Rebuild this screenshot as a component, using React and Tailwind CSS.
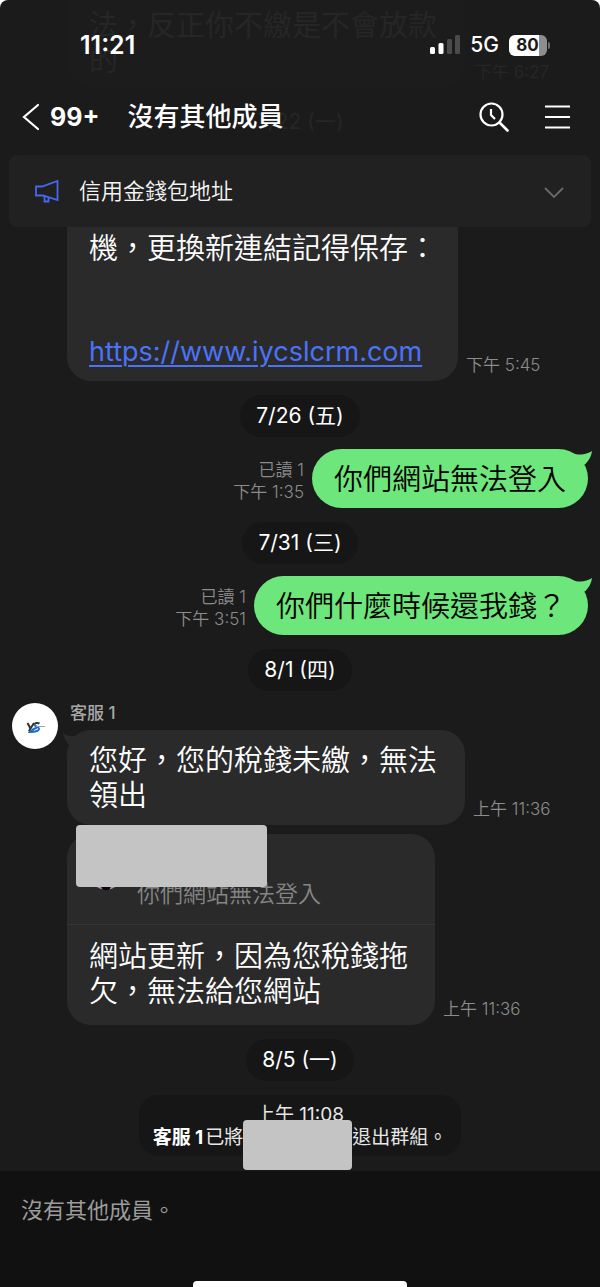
import { Fragment } from "react";

const AppFont =
  "font-[Inter,'Noto_Sans_CJK_TC',sans-serif] text-white bg-[#1b1b1b]";

const StatusBar = () => (
  <div className="relative flex items-center justify-between pl-20 pr-[50px] h-[90px]">
    <span className="text-[25px] leading-8 font-semibold">11:21</span>
    <div className="flex items-center">
      <svg className="w-[30px] h-5" viewBox="0 0 30 20" aria-hidden="true">
        <rect x="0" y="12" width="5" height="7" rx="1.5" fill="#fff" />
        <rect x="8.500" y="8" width="5" height="11" rx="1.500" fill="#fff" />
        <rect x="17" y="4" width="5" height="15" rx="1.500" fill="#4b4b4b" />
        <rect x="25" y="0" width="5" height="19" rx="1.500" fill="#4b4b4b" />
      </svg>
      <span className="ml-2.5 text-[21px] leading-6 font-medium">5G</span>
      <div className="ml-2.5 flex items-center">
        <span className="w-[38px] h-[21px] pr-px rounded-md bg-[linear-gradient(to_right,#fff_80%,#8e8e8e_80%)] text-[17px] leading-[21px] font-bold text-[#1b1b1b] text-center">
          80
        </span>
        <span className="ml-px w-[2px] h-[7px] rounded-r bg-[#6e6e6e]" />
      </div>
    </div>
  </div>
);

const TitleBar = () => (
  <div className="relative flex items-center h-[53px] pl-[22px] pr-[30px]">
    <button className="flex items-center" aria-label="返回">
      <svg className="w-[18px] h-7" viewBox="0 0 18 28" fill="none" stroke="#fff" strokeWidth="2.200" strokeLinecap="round">
        <path d="M16 2 2 14l14 12" />
      </svg>
      <span className="ml-2.5 text-[25px] leading-8 font-bold">99+</span>
    </button>
    <h1 className="ml-7 flex-1 text-[26px] leading-8 font-medium">沒有其他成員</h1>
    <button aria-label="搜尋">
      <svg className="w-[30px] h-[30px]" viewBox="0 0 30 30" fill="none" stroke="#fff" strokeWidth="2.200" strokeLinecap="round">
        <circle cx="12.500" cy="12.500" r="11" />
        <path d="M20.500 20.500 28.500 28.500" strokeWidth="2.600" />
        <path d="M12 7v6l4 4" strokeLinecap="butt" />
      </svg>
    </button>
    <button className="ml-9" aria-label="選單">
      <svg className="w-[25px] h-6" viewBox="0 0 25 24" stroke="#fff" strokeWidth="2.200">
        <path d="M0 1.500h25M0 12h25M0 22.500h25" />
      </svg>
    </button>
  </div>
);

// Older messages, barely visible through the header
const FadedHistory = () => (
  <div className="absolute inset-x-0 top-0 h-[150px] overflow-hidden text-[#262626]" aria-hidden="true">
    <div className="absolute left-[67px] top-0 w-[398px] h-[88px] rounded-b-[24px] bg-[#1c1c1c] pl-[22px] pt-2 text-[29px] leading-[35px]">
      <p>法，反正你不繳是不會放款</p>
      <p>的</p>
    </div>
    <p className="absolute left-[475px] top-[61px] text-[17px] leading-[22px]">下午 6:27</p>
    <p className="absolute inset-x-0 top-[108px] text-center text-[21px] leading-7">7/22 (一)</p>
  </div>
);

const Notice = () => (
  <button className="relative flex items-center mx-[9px] mt-3 h-[72px] pl-[26px] pr-[27px] rounded-lg bg-[#212121] text-left">
    <svg className="w-6 h-[23px]" viewBox="0 0 24 23" fill="none" stroke="#4468f2" strokeWidth="1.800">
      <path d="M1 6.500h6L22.500 1v19L8 15.500H1z" />
      <path d="M9.500 16v5.500h4V17" />
    </svg>
    <span className="ml-5 flex-1 text-[22px] leading-8 font-[350] text-[#f5f5f5]">信用金錢包地址</span>
    <svg className="w-5 h-3 mt-1" viewBox="0 0 20 12" fill="none" stroke="#6a6a6a" strokeWidth="1.800">
      <path d="m1 1 9 9 9-9" />
    </svg>
  </button>
);

const DatePill = ({ children }) => (
  <div className="self-center mt-3.5 h-[42px] px-4 rounded-full bg-[#161616] text-[21px] leading-[42px]">
    {children}
  </div>
);

const Time = ({ lines, className }) => (
  <div className={`pb-[5px] text-[17px] leading-[22px] font-[350] text-[#8c8c8c] ${className}`}>
    {lines.map((line, i) => (
      <Fragment key={line}>
        {i > 0 && <br />}
        {line}
      </Fragment>
    ))}
  </div>
);

const Sent = ({ text, time }) => (
  <div className="flex items-end justify-end mt-3 pr-3">
    <Time lines={["已讀 1", time]} className="mr-2 text-right" />
    <div className="relative px-[22px] pt-[13px] pb-[11px] rounded-[30px] bg-[#6de67b] text-[29px] leading-[35px] font-[350] text-black">
      {text}
      <svg className="absolute -right-1 top-0 w-7 h-5" viewBox="0 0 28 20" fill="#6de67b" aria-hidden="true">
        <path d="M6 3C14 7 22 6 28 2c-.5 5-3 9-6.500 13L16 18z" />
      </svg>
    </div>
  </div>
);

const Bubble = ({ children, className }) => (
  <div className={`relative bg-[#2a2a2a] text-[29px] leading-[35px] font-[350] ${className}`}>{children}</div>
);

const Avatar = () => (
  <svg className="w-[46px] h-[46px]" viewBox="0 0 46 46" role="img" aria-label="客服 1">
    <circle cx="23" cy="23" r="23" fill="#fff" />
    <g fill="none" strokeWidth="2">
      <path d="m15.500 20 3 5.500 3.500-5.500M18.500 25l-1.500 3.500" stroke="#333" />
      <path d="M27.500 20.500c-2-1-5-.5-5 1.200" stroke="#333" />
      <path d="M22.500 21.700c0 1.800 4.500 1.600 4.500 4s-4.500 3.500-9 3.300c2-2 4-3.500 7-4.500" stroke="#1f6fc4" />
      <path d="M24 23.500h9" stroke="#7fa9d6" strokeWidth="1" />
    </g>
  </svg>
);

export default function App() {
  return (
    <div className={`min-h-screen flex flex-col rounded-t-[8px] overflow-hidden ${AppFont}`}>
      <header className="relative flex flex-col">
        <FadedHistory />
        <StatusBar />
        <TitleBar />
        <Notice />
      </header>

      <main className="flex-1 flex flex-col">
        <div className="flex items-end pl-[67px]">
          <Bubble className="pl-[22px] pr-[21px] pt-1 pb-3 rounded-b-[24px]">
            <p>機，更換新連結記得保存：</p>
            <p className="mt-[68px] text-[27px] font-normal">
              <a href="https://www.iycslcrm.com" className="text-[#4a73f8] underline decoration-2 underline-offset-4">
                https://www.iycslcrm.com
              </a>
            </p>
          </Bubble>
          <Time lines={["下午 5:45"]} className="ml-2" />
        </div>

        <DatePill>7/26 (五)</DatePill>
        <Sent text="你們網站無法登入" time="下午 1:35" />
        <DatePill>7/31 (三)</DatePill>
        <Sent text="你們什麼時候還我錢？" time="下午 3:51" />
        <DatePill>8/1 (四)</DatePill>

        <div className="flex items-start mt-3 pl-3">
          <Avatar />
          <div className="ml-[9px]">
            <p className="pl-[3px] text-[17px] leading-5 font-medium text-[#a8a8a8]">客服 1</p>
            <div className="flex items-end mt-[7px]">
              <Bubble className="w-[398px] pl-[22px] pt-[13px] pb-3 rounded-[24px]">
                <svg className="absolute -left-1 top-[2px] w-6 h-5" viewBox="0 0 24 20" fill="#2a2a2a" aria-hidden="true">
                  <path d="M0 1c5 4 12 4 20 0L12 18 7 14C3 10 1 6 0 1z" />
                </svg>
                您好，您的稅錢未繳，無法
                <br />
                領出
              </Bubble>
              <Time lines={["上午 11:36"]} className="ml-2" />
            </div>
            <div className="flex items-end mt-[9px]">
              <Bubble className="w-[368px] rounded-[24px]">
                <div className="flex items-end h-[91px] pl-6 pb-[15px] border-b border-[#353535]">
                  <svg className="w-[30px] h-[30px] mb-[19px]" viewBox="0 0 30 30" aria-hidden="true">
                    <circle cx="15" cy="15" r="15" fill="#b98fb4" />
                    <ellipse cx="15" cy="22" rx="6" ry="9" fill="#080808" />
                  </svg>
                  <p className="ml-4 text-[23px] leading-[30px] text-[#858585]">你們網站無法登入</p>
                </div>
                <p className="pl-[22px] pt-3.5 pb-4">
                  網站更新，因為您稅錢拖
                  <br />
                  欠，無法給您網站
                </p>
                <div className="absolute left-[9px] -top-[9px] w-[191px] h-[62px] rounded bg-[#c4c4c4]" />
              </Bubble>
              <Time lines={["上午 11:36"]} className="ml-2" />
            </div>
          </div>
        </div>

        <DatePill>8/5 (一)</DatePill>
        <div className="self-center mt-3.5 mb-[15px] px-3.5 pt-2 pb-[7px] rounded-[20px] bg-[#161616] text-center text-[19px] leading-[23px] text-[#e6e6e6]">
          <p>上午 11:08</p>
          <p className="flex">
            <b className="font-bold text-white">客服 1</b>
            <span className="ml-0.5">已將</span>
            <span className="relative w-[109px]">
              <span className="absolute inset-x-0 -top-[6px] h-[50px] rounded bg-[#c4c4c4]" />
            </span>
            <span>退出群組。</span>
          </p>
        </div>
      </main>

      <footer className="flex flex-col items-center bg-[#111111]">
        <p className="self-stretch pl-[21px] pt-6 pb-[56px] text-[22px] leading-[30px] text-[#9c9c9c]">沒有其他成員。</p>
        <div className="w-[214px] h-1.5 rounded-t bg-white" />
      </footer>
    </div>
  );
}
